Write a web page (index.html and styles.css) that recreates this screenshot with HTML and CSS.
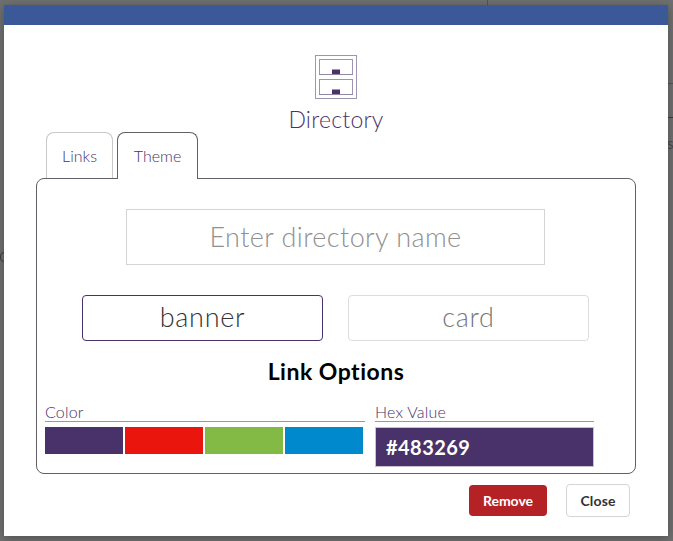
FILE: index.html
```html
<!DOCTYPE html>
<html lang="en">
<head>
<meta charset="utf-8">
<title>Directory</title>
<link rel="stylesheet" href="styles.css">
</head>
<body>
<div class="backdrop" aria-hidden="true">
  <i class="rule rule-top"></i><i class="rule rule-side"></i><i class="rule rule-side-dark"></i>
  <i class="ring"></i><span class="peek">s</span>
</div>
<main class="modal">
  <div class="bar"></div>
  <header class="head">
    <svg class="cabinet" width="42" height="44" viewBox="0 0 42 44" fill="none" stroke="#9e95b2">
      <rect x=".5" y=".5" width="41" height="43"/>
      <rect x="4.5" y="4.5" width="33" height="15"/>
      <rect x="4.5" y="24.5" width="33" height="15"/>
      <path d="M4 19.5h34M4 39.5h34" stroke="#8f87a4"/>
      <path d="M17 14.5h8v4.5h-8zM17 34.5h8V39h-8z" fill="#483269" stroke="none"/>
    </svg>
    <h1 class="title">Directory</h1>
  </header>
  <nav class="tabs">
    <a class="tab tab-links">Links</a>
    <a class="tab tab-theme active">Theme</a>
  </nav>
  <section class="panel">
    <input class="name" type="text" placeholder="Enter directory name">
    <div class="choices">
      <button class="choice selected">banner</button>
      <button class="choice">card</button>
    </div>
    <h2 class="subtitle">Link Options</h2>
    <div class="options">
      <div class="color">
        <div class="label">Color</div>
        <div class="swatches">
          <i class="swatch purple"></i><i class="swatch red"></i><i class="swatch green"></i><i class="swatch blue"></i>
        </div>
      </div>
      <div class="hex">
        <div class="label">Hex Value</div>
        <div class="hex-value">#483269</div>
      </div>
    </div>
  </section>
  <footer class="actions">
    <button class="btn remove">Remove</button>
    <button class="btn close">Close</button>
  </footer>
</main>
</body>
</html>
```
FILE: styles.css
```css
* { box-sizing: border-box; }
body {
  margin: 0;
  height: 541px;
  padding: 5px 5px 5px 4px;
  overflow: hidden;
  background: #707070;
  font-family: Lato, "Open Sans", sans-serif;
}
button, input { font-family: inherit; margin: 0; padding: 0; }
.backdrop { position: absolute; inset: 0; overflow: hidden; }
.rule { position: absolute; background: #555; }
.rule-top { left: 487px; top: 0; width: 1px; height: 5px; }
.rule-side { left: 668px; top: 83px; width: 5px; height: 1px; }
.rule-side-dark { left: 668px; top: 117px; width: 5px; height: 1px; background: #3c3c3c; }
.ring { position: absolute; left: 0; top: 252px; width: 10px; height: 10px; border: 1px solid #3c3c3c; border-radius: 4px; }
.peek { position: absolute; left: 667px; top: 134px; font-size: 15px; line-height: 18px; color: #4c4657; }
.modal {
  position: relative;
  width: 664px;
  height: 531px;
  background: #fff;
  box-shadow: 0 2px 10px rgba(0, 0, 0, .3);
}
.bar { height: 20px; background: #3b5998; }
.head { display: flex; flex-direction: column; align-items: center; height: 107px; padding-top: 30px; }
.cabinet { display: block; flex: none; }
.title { margin: 6px 0 0; font-size: 23px; line-height: 28px; font-weight: 300; color: #483269; letter-spacing: .25px; }
.tabs { display: flex; gap: 4px; height: 46px; margin-left: 42px; position: relative; z-index: 1; }
.tab {
  height: 46px;
  border: 1px solid #c8c8c8;
  border-bottom: 0;
  border-radius: 8px 8px 0 0;
  background: #fff;
  color: #483269;
  font-size: 16px;
  font-weight: 300;
  line-height: 45px;
  text-align: center;
}
.tab-links { width: 67px; }
.tab-theme { width: 81px; }
.tab.active { height: 47px; border-color: #626066; }
.panel {
  width: 600px;
  height: 296px;
  margin: 0 0 0 32px;
  padding: 30px 8px 0;
  border: 1px solid #626066;
  border-radius: 8px;
}
.name {
  display: block;
  width: 419px;
  height: 56px;
  margin-left: 81px;
  padding-bottom: 2px;
  border: 1px solid #d4d4d4;
  text-align: center;
  font-size: 27px;
  font-weight: 300;
  letter-spacing: .42px;
}
.name::placeholder { color: #909090; opacity: 1; }
.choices { display: flex; gap: 25px; margin: 30px 0 0 37px; }
.choice {
  width: 241px;
  height: 46px;
  padding-bottom: 3px;
  border: 1px solid #ddd;
  border-radius: 4px;
  background: #fff;
  color: #777;
  font-size: 27px;
  font-weight: 300;
  letter-spacing: .7px;
}
.choice.selected { border-color: #483269; color: #333; }
.subtitle { margin: 16px 0 0; text-align: center; font-size: 23px; line-height: 28px; font-weight: 700; color: #000; letter-spacing: .5px; }
.options { display: flex; gap: 10px; margin-top: 19px; }
.color { width: 320px; }
.hex { width: 219px; }
.label { height: 18px; border-bottom: 1px solid #9a9a9a; line-height: 16px; font-size: 16px; font-weight: 300; color: #483269; letter-spacing: .2px; }
.swatches { display: flex; gap: 2px; margin-top: 5px; }
.swatch { width: 78px; height: 27px; }
.purple { background: #483269; }
.red { background: #ea160d; }
.green { background: #82ba45; }
.blue { background: #0089cc; }
.hex-value {
  height: 40px;
  margin-top: 5px;
  padding-left: 10px;
  border: 1px solid #c8c4ce;
  background: #483269;
  color: #fff;
  font-size: 20px;
  line-height: 38px;
  font-weight: 700;
  letter-spacing: .45px;
}
.actions { display: flex; justify-content: flex-end; align-items: center; gap: 19px; height: 33px; margin: 10px 38px 0 0; }
.btn { padding-bottom: 1px; border: 0; border-radius: 4px; font-size: 14px; font-weight: 700; }
.remove { width: 78px; height: 31px; background: #b52225; color: #fff; }
.close { width: 64px; height: 33px; border: 1px solid #d4d4d4; background: #fff; color: #333; letter-spacing: .15px; }
```
